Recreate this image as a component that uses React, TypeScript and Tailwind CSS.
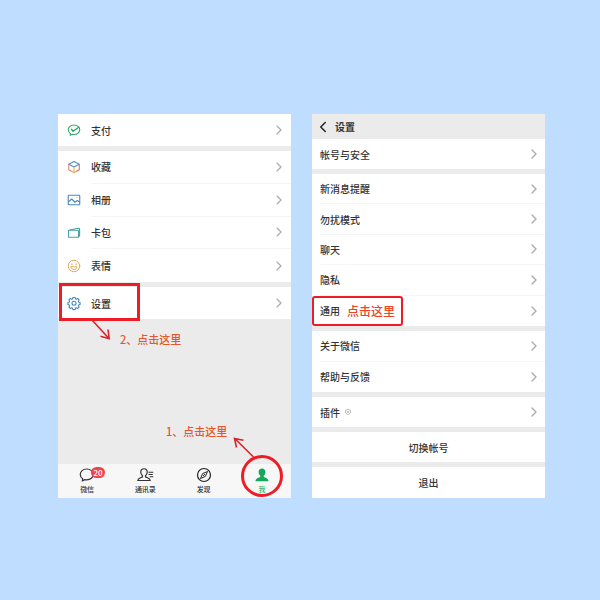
import type { ReactNode } from "react"
import { ChevronLeft, ChevronRight } from "lucide-react"

const PayIcon = () => (
    <svg viewBox="0 0 24 24" className="size-3 overflow-visible" fill="none" stroke="#2fa56b" strokeWidth="2.200" strokeLinecap="round" strokeLinejoin="round">
        <path d="M12 2C5.500 2 0.500 6.300 0.500 11.500c0 3.200 1.800 6 4.600 7.800L4.300 22.500l4-1.900c1.200.3 2.400.4 3.700.4 6.500 0 11.500-4.300 11.500-9.500S18.500 2 12 2z" />
        <path d="M7 10.500l3.200 4L21.500 6.500" strokeWidth="3" />
    </svg>
)

const FavoritesIcon = () => (
    <svg viewBox="0 0 24 24" className="size-3 overflow-visible" fill="none" strokeWidth="2.200" strokeLinecap="round" strokeLinejoin="round">
        <path d="M1.500 6.500L12 1l10.500 5.500L12 12z" stroke="#4a92c8" />
        <path d="M1.500 6.500v11L7 20.500" stroke="#e8837a" />
        <path d="M7 20.500l5 2.800V12" stroke="#e9b44c" />
        <path d="M12 23.300l5-2.800" stroke="#e0b454" />
        <path d="M17 20.500l5.500-3v-11" stroke="#dd6f62" />
    </svg>
)

const AlbumIcon = () => (
    <svg viewBox="0 0 24 24" className="size-3 overflow-visible" fill="none" stroke="#4b87bd" strokeWidth="2.200" strokeLinejoin="round">
        <rect x="0.500" y="2.500" width="23" height="19" rx="1" />
        <path d="M1 15.500l6.500-5.500 6.500 6.500 4.500-3.500 5 3.500" />
        <path d="M17 7h1.500" strokeWidth="1.500" />
    </svg>
)

const CardsIcon = () => (
    <svg viewBox="0 0 24 24" className="size-3 overflow-visible" fill="none" stroke="#4aa3b0" strokeWidth="2.200" strokeLinejoin="round">
        <path d="M1 6.500h18.500c.8 0 1.500.6 1.500 1.500v12.500H1z" />
        <path d="M3 6L21.500 2.500c1-.1 1.700.4 1.700 1.300V17l-2.200 3.500" stroke="#3aac86" />
    </svg>
)

const StickersIcon = () => (
    <svg viewBox="0 0 24 24" className="size-3 overflow-visible" fill="none" stroke="#dfae62" strokeWidth="2" strokeLinecap="round" strokeLinejoin="round">
        <circle cx="12" cy="12" r="11.500" />
        <path d="M6.200 13.500h11.600c0 3.500-2.500 5.500-5.800 5.500s-5.800-2-5.800-5.500z" />
        <path d="M7.800 7.500v1.800M16.200 7.500v1.800" strokeWidth="2.400" />
    </svg>
)

const GearIcon = () => (
    <svg viewBox="0 0 24 24" className="size-3 overflow-visible" fill="none" stroke="#3f86bd" strokeWidth="2.100" strokeLinejoin="round">
        <path d="M9.800 0.800h4.400l.8 3 1.500.7 2.700-1.600 3 3-1.600 2.700.6 1.600 3 .7v4.200l-3 .8-.6 1.500 1.600 2.700-3 3-2.700-1.500-1.500.6-.8 3H9.800l-.8-3-1.500-.6-2.700 1.500-3-3 1.600-2.700-.7-1.500-2.900-.8v-4.200l2.900-.7.7-1.600-1.600-2.700 3-3 2.700 1.600 1.500-.7z" />
        <circle cx="12" cy="12.500" r="4" />
    </svg>
)

const ChatIcon = () => (
    <svg viewBox="0 0 28 28" className="size-3.5 overflow-visible" fill="none" stroke="#333" strokeWidth="2.400" strokeLinejoin="round">
        <path d="M13.500 2C6 2 0.500 7 0.500 13c0 3.500 1.800 6.600 4.800 8.600L4.500 26l4.900-2.700c1.300.4 2.600.5 4.100.5 7.500 0 13-4.800 13-10.800S21 2 13.500 2z" />
    </svg>
)

const ContactsIcon = () => (
    <svg viewBox="0 0 30 28" className="h-3.5 w-[15px] overflow-visible" fill="none" stroke="#333" strokeWidth="2.400" strokeLinejoin="round">
        <path d="M12 1.500c-4 0-6.500 2.700-6.500 6.500 0 3.200 1.300 5.800 3.500 7.300v2.200c-1.500 1.800-9 2.500-9.500 7.500h25c-.5-5-8-5.700-9.500-7.500v-2.200c2.200-1.500 3.500-4.100 3.500-7.300 0-3.800-2.500-6.500-6.500-6.500z" />
        <path d="M21 8.500H30.500M21 13H29.500M23.500 17.500H30.500" strokeWidth="2" />
    </svg>
)

const DiscoverIcon = () => (
    <svg viewBox="0 0 28 28" className="size-3.5 overflow-visible" fill="none" stroke="#222" strokeWidth="2.400" strokeLinejoin="round">
        <circle cx="14" cy="14" r="13" />
        <path d="M21 7l-4.200 9.800L7 21l4.200-9.800z" strokeWidth="2" />
        <path d="M12 16l4-4" strokeWidth="2" />
    </svg>
)

const MeIcon = () => (
    <svg viewBox="0 0 28 28" className="size-3.5" fill="#14a85b">
        <path d="M14 1c-4.100 0-6.800 2.900-6.800 6.800 0 3.300 1.200 6 3.400 7.600v2.100C9 19.300 1 20 1 26.500h26c0-6.500-8-7.200-9.600-9v-2.100c2.200-1.600 3.400-4.300 3.400-7.600C20.800 3.900 18.100 1 14 1z" />
    </svg>
)

const Group = ({ children, className = "" }: { children: ReactNode; className?: string }) => (
    <div className={`grid auto-rows-fr bg-white ${className}`}>{children}</div>
)

const MeRow = ({ icon, label, line }: { icon: ReactNode; label: string; line?: boolean }) => (
    <a href="#" className="flex h-full items-center pl-2.5">
        {icon}
        <span className={`ml-[11px] flex h-full min-h-8 flex-1 items-center justify-between pr-1 ${line ? "border-b border-[#f5f5f5]" : ""}`}>
            {label}
            <ChevronRight className="size-4 text-[#ababab]" strokeWidth={1.75} />
        </span>
    </a>
)

const SettingRow = ({ label, line, children }: { label: string; line?: boolean; children?: ReactNode }) => (
    <a href="#" className="flex min-h-[30px] pl-2">
        <span className={`flex flex-1 items-center pr-[3px] ${line ? "border-b border-[#f5f5f5]" : ""}`}>
            {label}
            {children}
            <ChevronRight className="ml-auto size-4 text-[#ababab]" strokeWidth={2} />
        </span>
    </a>
)

const Tab = ({ label, active, children }: { label: string; active?: boolean; children: ReactNode }) => (
    <button className={`relative flex flex-1 flex-col items-center gap-0.5 pt-1 pb-1 text-[7px] leading-[10px] ${active ? "text-[#3fb878]" : "text-[#333]"}`}>
        {children}
        {label}
    </button>
)

const MeScreen = () => (
    <section className="flex flex-1 flex-col bg-[#ebebeb]">
        <div className="flex flex-col gap-[5px]">
            <Group>
                <MeRow icon={<PayIcon />} label="支付" />
            </Group>
            <Group className="min-h-[131px]">
                <MeRow icon={<FavoritesIcon />} label="收藏" line />
                <MeRow icon={<AlbumIcon />} label="相册" line />
                <MeRow icon={<CardsIcon />} label="卡包" line />
                <MeRow icon={<StickersIcon />} label="表情" />
            </Group>
            <div className="relative">
                <Group>
                    <MeRow icon={<GearIcon />} label="设置" />
                </Group>
                <div className="pointer-events-none absolute -top-1 left-px h-[38px] w-[81px] border-3 border-[#ee1c25]" />
                <svg viewBox="0 0 20 21" className="pointer-events-none absolute top-full left-[33px] h-[21px] w-5" fill="none" stroke="#d8232b" strokeWidth="1.600">
                    <path d="M1 1L18 19.500M17 10.500l1.200 9.200-8.700-2.500" />
                </svg>
            </div>
        </div>
        <div className="flex flex-1 flex-col gap-[76px] pt-3 pb-[25px] text-[11px] leading-4 text-[#e8552b]">
            <p className="pl-[62px]">2、点击这里</p>
            <p className="pl-[108px]">1、点击这里</p>
        </div>
        <nav className="flex bg-[#f7f7f7]">
            <Tab label="微信">
                <ChatIcon />
                <span className="absolute top-[3px] left-[33px] flex h-[11px] w-3.5 items-center justify-center rounded-full bg-[#f0434a] text-[8px] text-white">20</span>
            </Tab>
            <Tab label="通讯录">
                <ContactsIcon />
            </Tab>
            <Tab label="发现">
                <DiscoverIcon />
            </Tab>
            <Tab label="我" active>
                <MeIcon />
                <span className="pointer-events-none absolute -top-[9px] left-2 size-[42px] rounded-full border-3 border-[#ee1c25]" />
                <svg viewBox="0 0 22 22" className="pointer-events-none absolute -top-[27px] left-0 size-[22px]" fill="none" stroke="#d8232b" strokeWidth="1.600">
                    <path d="M20.500 20L2 1.800M3.500 10.500L1.500 1.500l9 1.700" />
                </svg>
            </Tab>
        </nav>
    </section>
)

const SettingsScreen = () => (
    <section className="flex flex-1 flex-col bg-[#ebebeb]">
        <header className="flex h-[25px] items-center pl-0.5">
            <button aria-label="返回">
                <ChevronLeft className="size-[18px] text-[#222]" strokeWidth={2} />
            </button>
            <h1 className="ml-[3px] font-bold">设置</h1>
        </header>
        <div className="flex flex-col gap-[5px]">
            <Group>
                <SettingRow label="帐号与安全" />
            </Group>
            <Group className="min-h-[152px]">
                <SettingRow label="新消息提醒" line />
                <SettingRow label="勿扰模式" line />
                <SettingRow label="聊天" line />
                <SettingRow label="隐私" line />
                <div className="relative grid">
                    <SettingRow label="通用">
                        <span className="ml-[7px] text-[12px] font-medium text-[#ee4423]">点击这里</span>
                    </SettingRow>
                    <div className="pointer-events-none absolute inset-y-0 left-0 w-[91px] rounded-[3px] border-2 border-[#ee1c25]" />
                </div>
            </Group>
            <Group className="min-h-[61px]">
                <SettingRow label="关于微信" line />
                <SettingRow label="帮助与反馈" />
            </Group>
            <Group>
                <SettingRow label="插件">
                    <svg viewBox="0 0 12 12" className="ml-[5px] size-1.5 overflow-visible" fill="none" stroke="#aaa" strokeWidth="1.500">
                        <path d="M1 2.500L6 0.500l5 2V8L6 11.500 1 8z" />
                        <circle cx="6" cy="5.800" r="1.500" />
                    </svg>
                </SettingRow>
            </Group>
            <button className="h-[30px] bg-white">切换帐号</button>
            <button className="h-[31px] bg-white">退出</button>
        </div>
    </section>
)

export default function App() {
    return (
        <main className="min-h-screen bg-[#bfdeff] pt-[114px] pr-[55px] pl-[58px] font-['Noto_Sans_CJK_SC',sans-serif] text-[10px] font-medium text-[#333]">
            <div className="flex items-start gap-[21px]">
                <MeScreen />
                <SettingsScreen />
            </div>
        </main>
    )
}
